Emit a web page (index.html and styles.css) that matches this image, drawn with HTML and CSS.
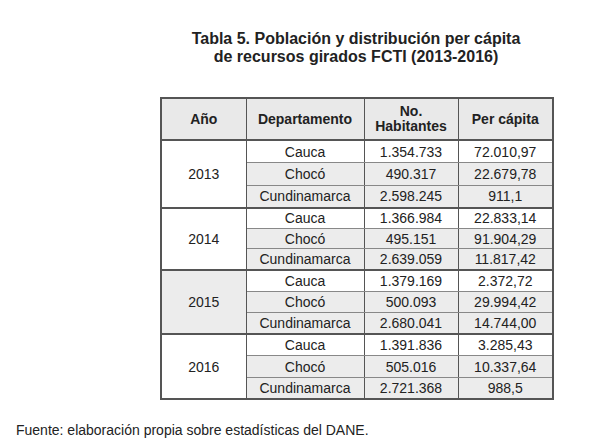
FILE: index.html
```html
<!DOCTYPE html>
<html lang="es">
<head>
    <meta charset="UTF-8">
    <title>Tabla 5</title>
    <link rel="stylesheet" href="styles.css">
</head>
<body>
    <div class="page">
        <div class="figure">
            <h1 class="title">Tabla 5. Población y distribución per cápita<br>de recursos girados FCTI (2013-2016)</h1>

            <table class="data-table">
                <thead>
                    <tr>
                        <th class="col-year">Año</th>
                        <th class="col-dep">Departamento</th>
                        <th class="col-hab">No.<br>Habitantes</th>
                        <th class="col-pc">Per cápita</th>
                    </tr>
                </thead>
                <tbody class="g1">
                    <tr><td class="year" rowspan="3">2013</td><td>Cauca</td><td>1.354.733</td><td>72.010,97</td></tr>
                    <tr class="shade"><td>Chocó</td><td>490.317</td><td>22.679,78</td></tr>
                    <tr class="shade"><td>Cundinamarca</td><td>2.598.245</td><td>911,1</td></tr>
                </tbody>
                <tbody class="g2">
                    <tr><td class="year" rowspan="3">2014</td><td>Cauca</td><td>1.366.984</td><td>22.833,14</td></tr>
                    <tr class="shade"><td>Chocó</td><td>495.151</td><td>91.904,29</td></tr>
                    <tr class="shade"><td>Cundinamarca</td><td>2.639.059</td><td>11.817,42</td></tr>
                </tbody>
                <tbody class="g3">
                    <tr><td class="year shade-cell" rowspan="3">2015</td><td>Cauca</td><td>1.379.169</td><td>2.372,72</td></tr>
                    <tr class="shade"><td>Chocó</td><td>500.093</td><td>29.994,42</td></tr>
                    <tr class="shade"><td>Cundinamarca</td><td>2.680.041</td><td>14.744,00</td></tr>
                </tbody>
                <tbody class="g4">
                    <tr><td class="year" rowspan="3">2016</td><td>Cauca</td><td>1.391.836</td><td>3.285,43</td></tr>
                    <tr class="shade"><td>Chocó</td><td>505.016</td><td>10.337,64</td></tr>
                    <tr class="shade"><td>Cundinamarca</td><td>2.721.368</td><td>988,5</td></tr>
                </tbody>
            </table>
        </div>

        <p class="source">Fuente: elaboración propia sobre estadísticas del DANE.</p>
    </div>
</body>
</html>
```

FILE: styles.css
```css
* {
    margin: 0;
    padding: 0;
    box-sizing: border-box;
}

body {
    font-family: "Liberation Sans", Arial, sans-serif;
    background: white;
    color: #222;
}

.page {
    width: 608px;
    height: 442px;
    padding-top: 30px;
}

.figure {
    width: 392px;
    margin-left: 160px;
}

.title {
    text-align: center;
    font-size: 16px;
    font-weight: bold;
    line-height: 18px;
    color: #222;
    margin-bottom: 31px;
}

.data-table {
    width: 392px;
    border-collapse: collapse;
    border: 2px solid #555;
    font-size: 14px;
    table-layout: fixed;
}

.col-year { width: 85px; }
.col-dep { width: 118px; }
.col-hab { width: 94px; }
.col-pc { width: 95px; }

.data-table th {
    background: #e9e9e9;
    font-weight: bold;
    height: 42px;
    line-height: 15px;
    text-align: center;
    border: 1px solid #555;
    border-bottom: 2px solid #555;
}

.data-table td {
    text-align: center;
    height: 21px;
    padding: 0;
    border-left: 1px solid #555;
    border-right: 1px solid #555;
    border-bottom: 1px solid #888;
    background: white;
}

.data-table tbody {
    border-bottom: 2px solid #555;
}

.data-table tr.shade td {
    background: #ececec;
}

.data-table td.year {
    background: white;
}

.data-table td.shade-cell {
    background: #ececec;
}

.g1 td { height: 22.5px; }
.g2 td { height: 20.7px; }
.g3 td { height: 21.6px; }
.g4 td { height: 21.6px; }

.source {
    font-size: 14px;
    color: #222;
    margin-left: 16px;
    margin-top: 22px;
}
```
